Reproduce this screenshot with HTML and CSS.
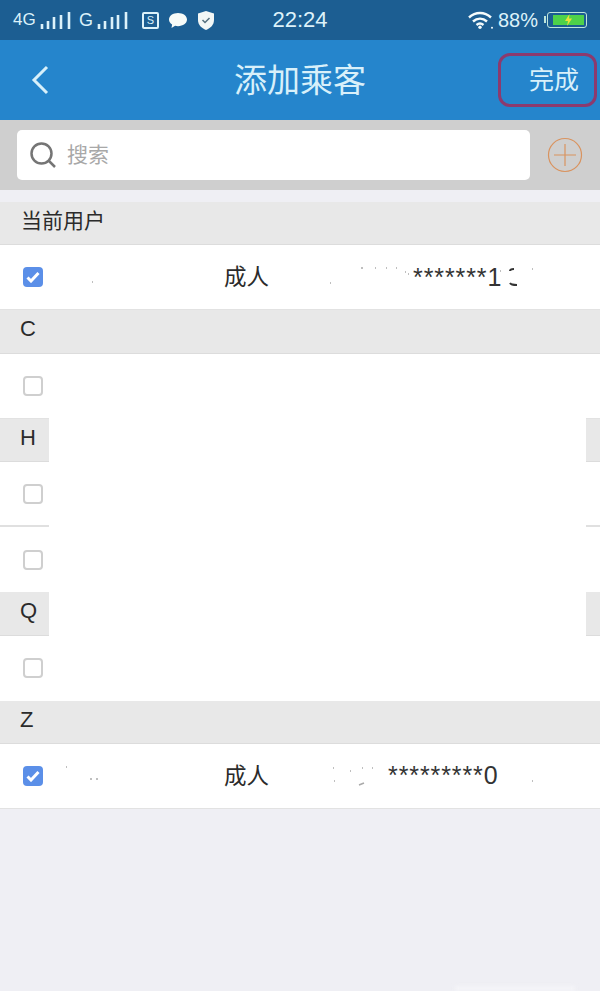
FILE: index.html
```html
<!DOCTYPE html>
<html lang="zh-CN">
  <head>
    <meta charset="UTF-8" />
    <title>添加乘客</title>
    <link rel="stylesheet" href="styles.css">
  </head>
  <body>
    <div class="status-bar">
      <div class="status-left">
        <span class="net net-4g">4G</span>
        <svg class="bars" width="31" height="18" viewBox="0 0 31 18"><path d="M2 17v-5M8 17V9M14 17V5M21 17V3M29 17V0" /></svg>
        <span class="net net-g">G</span>
        <svg class="bars bars-g" width="31" height="18" viewBox="0 0 31 18"><path d="M2 17v-5M8 17V9M15 17V5M21 17V3M29 17V0" /></svg>
        <span class="sim">S</span>
        <svg class="bubble" width="20" height="17" viewBox="0 0 20 17"><path d="M10 1c5 0 9 2.800 9 6.600s-4 6.600-9 6.600c-1 0-2-.1-2.900-.4L3.500 16l.6-3.500C2.100 11.300 1 9.600 1 7.600 1 3.800 5 1 10 1z" /></svg>
        <svg class="shield" width="18" height="19" viewBox="0 0 18 19"><path class="shield-body" d="M9 0l8 2.500V9c0 5-3.500 8-8 10-4.500-2-8-5-8-10V2.500z" /><path class="shield-check" d="M5.500 9l2.500 2.500 4.500-4.500" /></svg>
      </div>
      <div class="status-time">22:24</div>
      <div class="status-right">
        <svg class="wifi" width="26" height="18" viewBox="0 0 26 18"><path d="M1 6.500c6.500-6 15.500-6 22 0M5 10.500c4.200-3.800 9.800-3.800 14 0M8.500 14c2.200-1.800 4.800-1.800 7 0" /><circle cx="12" cy="16.300" r="1.700" /><circle cx="24" cy="16.800" r="1" /></svg>
        <span class="percent">88%</span>
        <div class="battery">
          <div class="battery-fill">
            <svg width="9" height="12" viewBox="0 0 9 12"><path d="M5.500 0L1 7h3l-1 5 5-7.500H5z" /></svg>
          </div>
        </div>
      </div>
    </div>

    <header class="nav">
      <div class="nav-left">
        <svg width="18" height="30" viewBox="0 0 18 30"><path d="M16 2L3 15l13 13" /></svg>
      </div>
      <h1 class="nav-title">添加乘客</h1>
      <div class="nav-right">
        <a class="done-btn" href="#">完成</a>
      </div>
    </header>

    <div class="search-bar">
      <div class="search-box">
        <svg width="26" height="26" viewBox="0 0 26 26"><circle cx="11.500" cy="11.500" r="10" /><path d="M19 19l6 6" /></svg>
        <span class="search-text">搜索</span>
      </div>
      <svg class="add-btn" width="36" height="36" viewBox="0 0 36 36"><circle cx="18" cy="18" r="16.500" /><path d="M18 7v22M7 18h22" /></svg>
    </div>

    <main class="list">
      <div class="section section-cjk">当前用户</div>
      <div class="row">
        <span class="check checked"><svg width="14" height="12" viewBox="0 0 14 12"><path d="M1.500 6.500L5 10l7.500-8" /></svg></span>
        <span class="type">成人</span>
        <span class="id-no id-first"><span class="stars">*******</span><span class="digit">1</span></span>
        <svg class="specks" width="600" height="65" viewBox="0 0 600 65">
          <path class="speck-line" d="M92 37h1M361 23h2M375 23h1M386 23h1M396 23h1M405 27h1M408 29h1M330 38h1M500 26h1M532 24h1" />
          <path class="speck-dark" d="M514 24c-3 0-4 1-4 2M510 38c1 2 4 2 7 2" />
        </svg>
      </div>

      <div class="section">C</div>
      <div class="row"><span class="check"></span></div>

      <div class="section">H</div>
      <div class="row row-line"><span class="check"></span></div>
      <div class="row row-plain"><span class="check"></span></div>

      <div class="section">Q</div>
      <div class="row row-plain"><span class="check"></span></div>

      <div class="section">Z</div>
      <div class="row">
        <span class="check checked"><svg width="14" height="12" viewBox="0 0 14 12"><path d="M1.500 6.500L5 10l7.500-8" /></svg></span>
        <span class="type">成人</span>
        <span class="id-no id-last"><span class="stars">*********</span><span class="digit">0</span></span>
        <svg class="specks" width="600" height="65" viewBox="0 0 600 65">
          <path class="speck-line" d="M66 23h1M90 35h2M96 35h2M333 24h1M350 27h1M362 24h1M372 24h1M334 37h1M359 41l5-2M532 37h1" />
        </svg>
      </div>

      <div class="redact"></div>
    </main>

    <div class="watermark"></div>
  </body>
</html>
```

FILE: styles.css
```css
* {
  box-sizing: border-box;
}

body {
  position: relative;
  width: 600px;
  height: 991px;
  margin: 0;
  overflow: hidden;
  background-color: #efeff4;
  font-family: "Liberation Sans", "Noto Sans CJK SC", sans-serif;
}

/* status bar */
.status-bar {
  display: grid;
  grid-template-columns: 1fr auto 1fr;
  align-items: center;
  height: 40px;
  background-color: #1c5e92;
  color: #dcf2fa;
}

.status-left,
.status-right {
  display: flex;
  align-items: center;
}

.status-left {
  padding-left: 13px;
}

.status-right {
  justify-content: flex-end;
  padding-right: 13px;
}

.net {
  font-size: 17px;
  line-height: 18px;
}

.net-4g {
  width: 27px;
}

.net-g {
  width: 18px;
  margin-left: 8px;
  font-size: 18px;
}

.bars {
  margin-top: 1px;
}

.bars path {
  fill: none;
  stroke: #dcf2fa;
  stroke-width: 2.6;
}

.sim {
  width: 17px;
  height: 17px;
  margin-left: 14px;
  border: 2px solid #dcf2fa;
  border-radius: 2px;
  font-size: 11px;
  line-height: 13px;
  text-align: center;
}

.bubble {
  margin-left: 9px;
  fill: #f7fbf8;
}

.shield {
  margin-left: 9px;
}

.shield-body {
  fill: #f2f7f6;
}

.shield-check {
  fill: none;
  stroke: #55707f;
  stroke-width: 1.5;
}

.status-time {
  font-size: 22px;
  line-height: 40px;
}

.wifi {
  fill: #f4fbfb;
}

.wifi path {
  fill: none;
  stroke: #f4fbfb;
  stroke-width: 2.4;
}

.percent {
  margin-left: 4px;
  font-size: 20px;
}

.battery {
  position: relative;
  width: 40px;
  height: 16px;
  margin-left: 9px;
  padding: 2px 2px 2px 5px;
  border: 1.500px solid #bfe6dc;
  border-radius: 3px;
}

/* nub sits on the left of the battery */
.battery::before {
  content: "";
  position: absolute;
  top: 3px;
  left: -4px;
  width: 2px;
  height: 7px;
  background-color: #bfe6dc;
}

.battery-fill {
  display: flex;
  align-items: center;
  justify-content: center;
  height: 100%;
  background-color: #4ed24a;
}

.battery-fill svg {
  fill: #e6e23a;
}

/* nav */
.nav {
  display: grid;
  grid-template-columns: 1fr auto 1fr;
  align-items: center;
  height: 80px;
  background-color: #2585cc;
}

.nav-left {
  display: flex;
  padding-left: 31px;
}

.nav-left path {
  fill: none;
  stroke: #d8f0fa;
  stroke-width: 3;
}

.nav-title {
  margin: 0;
  padding-bottom: 4px;
  color: #d8f0fa;
  font-size: 33px;
  font-weight: 400;
}

.nav-right {
  display: flex;
  justify-content: flex-end;
  padding-right: 3px;
}

.done-btn {
  width: 99px;
  height: 54px;
  padding-right: 15px;
  border: 3px solid #8c3a6e;
  border-radius: 12px;
  color: #d8f0fa;
  font-size: 25px;
  line-height: 48px;
  text-align: right;
  text-decoration: none;
}

/* search */
.search-bar {
  display: flex;
  align-items: center;
  gap: 17px;
  height: 70px;
  padding: 0 17px;
  background-color: #cfcfcf;
}

.search-box {
  display: flex;
  flex: 1;
  align-items: center;
  gap: 11px;
  height: 50px;
  padding-left: 13px;
  border-radius: 5px;
  background-color: #fff;
}

.search-box svg {
  fill: none;
  stroke: #757575;
  stroke-width: 2.500;
}

.search-text {
  padding-bottom: 4px;
  color: #a8a8a8;
  font-size: 21px;
}

.add-btn {
  fill: none;
  stroke: #d9935f;
  stroke-width: 1.200;
}

/* list */
.list {
  position: relative;
  margin-top: 12px;
}

.section {
  height: 43.200px;
  padding-left: 20px;
  border-bottom: 1px solid #dcdcdc;
  background-color: #e8e8e8;
  color: #2b2b2b;
  font-size: 22px;
  line-height: 38px;
}

.section-cjk {
  padding-left: 21px;
  font-size: 21px;
}

.row {
  position: relative;
  display: flex;
  align-items: center;
  height: 65.200px;
  padding-left: 23px;
  border-bottom: 1px solid #e2e2e2;
  background-color: #fff;
}

.row-plain {
  border-bottom: 0;
}

.row-line {
  border-bottom: 2px solid #e0e0e0;
}

.check {
  display: flex;
  align-items: center;
  justify-content: center;
  flex: none;
  width: 20px;
  height: 20px;
  border: 2px solid #cfcfcf;
  border-radius: 4px;
}

.checked {
  border: 0;
  background-color: #5b8fe8;
}

.checked svg {
  fill: none;
  stroke: #fff;
  stroke-width: 3;
}

.type {
  position: absolute;
  top: 14px;
  left: 224px;
  color: #2b2b2b;
  font-size: 22.500px;
}

.id-no {
  position: absolute;
  color: #333;
  white-space: nowrap;
}

.id-first {
  left: 413px;
}

.id-last {
  left: 388px;
}

.stars {
  font-size: 25px;
  letter-spacing: 0.900px;
}

.digit {
  font-size: 25px;
}

.specks {
  position: absolute;
  top: 0;
  left: 0;
}

.speck-line {
  fill: none;
  stroke: #aaa;
  stroke-width: 1.500;
}

.speck-dark {
  fill: none;
  stroke: #333;
  stroke-width: 2;
}

/* white block painted across the middle rows */
.redact {
  position: absolute;
  top: 152px;
  left: 49px;
  width: 537px;
  height: 347px;
  background-color: #fff;
}

.watermark {
  position: absolute;
  bottom: 0;
  left: 455px;
  width: 120px;
  height: 5px;
  background-color: #f5f5f8;
  filter: blur(2px);
}
```
